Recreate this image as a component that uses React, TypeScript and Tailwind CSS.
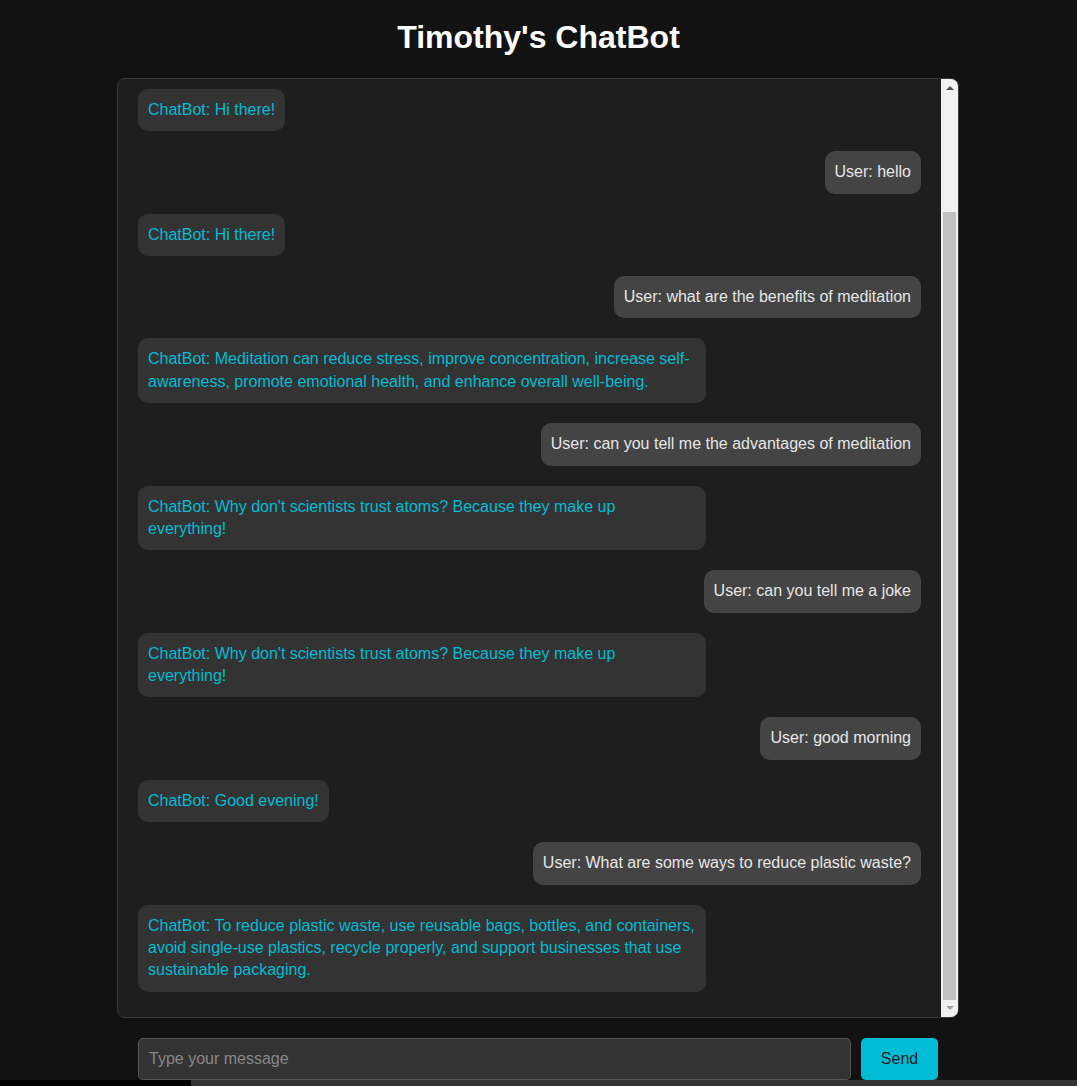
import { useLayoutEffect, useRef, useState } from 'react';

type Message = { sender: 'User' | 'ChatBot'; text: string };

const initialMessages: Message[] = [
  { sender: 'ChatBot', text: 'Hello! How can I help you today?' },
  { sender: 'User', text: 'hi' },
  { sender: 'ChatBot', text: 'Hi there!' },
  { sender: 'User', text: 'hello' },
  { sender: 'ChatBot', text: 'Hi there!' },
  { sender: 'User', text: 'what are the benefits of meditation' },
  {
    sender: 'ChatBot',
    text: 'Meditation can reduce stress, improve concentration, increase self-awareness, promote emotional health, and enhance overall well-being.',
  },
  { sender: 'User', text: 'can you tell me the advantages of meditation' },
  { sender: 'ChatBot', text: "Why don't scientists trust atoms? Because they make up everything!" },
  { sender: 'User', text: 'can you tell me a joke' },
  { sender: 'ChatBot', text: "Why don't scientists trust atoms? Because they make up everything!" },
  { sender: 'User', text: 'good morning' },
  { sender: 'ChatBot', text: 'Good evening!' },
  { sender: 'User', text: 'What are some ways to reduce plastic waste?' },
  {
    sender: 'ChatBot',
    text: 'To reduce plastic waste, use reusable bags, bottles, and containers, avoid single-use plastics, recycle properly, and support businesses that use sustainable packaging.',
  },
];

function Arrow({ up, color }: { up: boolean; color: string }) {
  return (
    <svg width="8" height="4" viewBox="0 0 8 4">
      <polygon points={up ? '4,0 8,4 0,4' : '0,0 8,0 4,4'} fill={color} />
    </svg>
  );
}

export default function App() {
  const [messages, setMessages] = useState<Message[]>(initialMessages);
  const [input, setInput] = useState('');
  const boxRef = useRef<HTMLDivElement>(null);

  // keep the chat scrolled to the latest message
  useLayoutEffect(() => {
    if (boxRef.current) boxRef.current.scrollTop = boxRef.current.scrollHeight;
  }, [messages]);

  const handleSend = () => {
    if (!input.trim()) return;
    setMessages([...messages, { sender: 'User', text: input.trim() }]);
    setInput('');
  };

  return (
    <div className="min-h-screen bg-[#121212] flex flex-col font-['Liberation_Sans',Arial,sans-serif]">
      <h1 className="pt-[19px] mb-[22px] text-center text-white text-[32px] leading-[37px] font-bold">
        Timothy's ChatBot
      </h1>

      <div className="ml-[117px] w-[842px] h-[940px] flex bg-[#1e1e1e] border border-[#3a3a3a] rounded-lg overflow-hidden">
        <div
          ref={boxRef}
          className="flex-1 overflow-y-auto px-5 pt-5 pb-[25px] flex flex-col gap-5"
        >
          {messages.map((m, i) => (
            <div
              key={i}
              className={
                m.sender === 'User'
                  ? 'self-end max-w-[568px] p-[10px] rounded-[10px] bg-[#444] text-[#e6e6e6] text-base leading-[1.4] shrink-0'
                  : 'self-start max-w-[568px] p-[10px] rounded-[10px] bg-[#333] text-[#00bcd4] text-base leading-[1.4] shrink-0'
              }
            >
              {m.sender}: {m.text}
            </div>
          ))}
        </div>

        {/* scrollbar */}
        <div className="w-[17px] bg-[#f1f1f1] flex flex-col">
          <div className="h-[17px] flex justify-center pt-[7px]">
            <Arrow up color="#505050" />
          </div>
          <div className="flex-1 flex flex-col px-[2px] pt-[116px]">
            <div className="flex-1 bg-[#c1c1c1]" />
          </div>
          <div className="h-[17px] flex justify-center pt-[6px]">
            <Arrow up={false} color="#a3a3a3" />
          </div>
        </div>
      </div>

      <div className="ml-[138px] w-[800px] mt-5 flex gap-[10px]">
        <input
          type="text"
          value={input}
          onChange={(e) => setInput(e.target.value)}
          onKeyDown={(e) => e.key === 'Enter' && handleSend()}
          placeholder="Type your message"
          className="flex-1 h-[42px] px-[10px] bg-[#333] border border-[#555] rounded-[5px] text-white text-base placeholder:text-[#888] focus:outline-none"
        />
        <button
          onClick={handleSend}
          className="w-[77px] h-[42px] bg-[#00bcd4] text-[#1e1e1e] text-base rounded-[5px]"
        >
          Send
        </button>
      </div>

      <div className="h-[6px] flex">
        <div className="w-[191px] bg-black" />
        <div className="flex-1 bg-[#333]" />
      </div>
    </div>
  );
}
